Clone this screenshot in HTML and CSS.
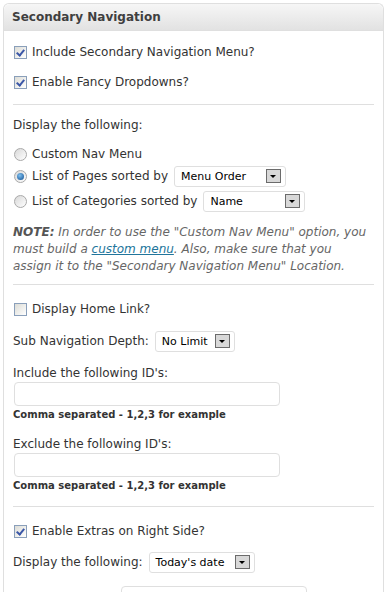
FILE: index.html
```html
<!DOCTYPE html>
<html lang="en">
<head>
    <meta charset="UTF-8">
    <title>Secondary Navigation</title>
    <link rel="stylesheet" href="styles.css">
</head>
<body>
    <div class="postbox">
        <h3 class="hndle">Secondary Navigation</h3>
        <div class="inside">
            <div class="line first"><span class="cb checked"></span>Include Secondary Navigation Menu?</div>
            <div class="line gap-cb"><span class="cb checked"></span>Enable Fancy Dropdowns?</div>
            <div class="sep"></div>

            <div class="line after-sep">Display the following:</div>
            <div class="line radio-first"><span class="rd"></span>Custom Nav Menu</div>
            <div class="line sel-row"><span class="rd on"></span>List of Pages sorted by
                <span class="select w-menu">Menu Order<span class="arrow"></span></span>
            </div>
            <div class="line sel-row"><span class="rd"></span>List of Categories sorted by
                <span class="select w-name">Name<span class="arrow"></span></span>
            </div>

            <p class="note"><b>NOTE:</b> In order to use the "Custom Nav Menu" option, you must build a <a href="#">custom menu</a>. Also, make sure that you<br>assign it to the "Secondary Navigation Menu" Location.</p>
            <div class="sep sep-note"></div>

            <div class="line after-sep2"><span class="cb"></span>Display Home Link?</div>
            <div class="line sel-row depth">Sub Navigation Depth:
                <span class="select w-limit">No Limit<span class="arrow"></span></span>
            </div>

            <div class="line label">Include the following ID's:</div>
            <div class="text-input"></div>
            <div class="hint">Comma separated - 1,2,3 for example</div>

            <div class="line label label-2">Exclude the following ID's:</div>
            <div class="text-input"></div>
            <div class="hint">Comma separated - 1,2,3 for example</div>
            <div class="sep sep-3"></div>

            <div class="line after-sep2"><span class="cb checked"></span>Enable Extras on Right Side?</div>
            <div class="line sel-row extras">Display the following:
                <span class="select w-date">Today's date<span class="arrow"></span></span>
            </div>
            <div class="text-input extra-input"></div>
        </div>
    </div>
</body>
</html>
```

FILE: styles.css
```css
body {
    margin: 0;
    background-color: #fff;
    font-family: "DejaVu Sans", Verdana, sans-serif;
    font-size: 12px;
    color: #333;
}
.postbox {
    margin: 3px 4px 0 3px;
    border: 1px solid #dfdfdf;
    border-bottom: none;
    border-radius: 6px 6px 0 0;
    height: 600px;
}
.hndle {
    margin: 0;
    height: 26px;
    line-height: 26px;
    padding: 0 8px;
    font-size: 12px;
    color: #3f3f3f;
    background: linear-gradient(#f6f6f6, #e2e2e2);
    border-bottom: 1px solid #dfdfdf;
    border-radius: 6px 6px 0 0;
}
.inside {
    padding: 0 9px;
}
.line {
    display: flex;
    align-items: center;
    height: 17px;
    line-height: 17px;
}
.first { margin-top: 13px; }
.gap-cb { margin-top: 13px; }
.sep {
    height: 1px;
    background-color: #dfdfdf;
    margin-top: 13px;
}
.after-sep { margin-top: 12px; }
.after-sep2 { margin-top: 16px; }
.radio-first { margin-top: 12px; }
.sel-row {
    height: 24px;
    margin-top: 1px;
}
.depth { margin-top: 11px; }
.extras { margin-top: 10px; }
.label { margin-top: 12px; }
.label-2 { margin-top: 14px; }
.sep-note { margin-top: 9px; }
.sep-3 { margin-top: 13px; }

/* checkbox */
.cb {
    width: 11px;
    height: 11px;
    border: 1px solid #8a9fba;
    background: linear-gradient(135deg, #dcdcd6, #fff);
    margin: 0 5px 0 1px;
    position: relative;
}
.cb.checked::after {
    content: "";
    position: absolute;
    left: 3px;
    top: 1px;
    width: 3px;
    height: 6px;
    border: solid #3b57a8;
    border-width: 0 2px 2px 0;
    transform: rotate(40deg);
}

/* radio */
.rd {
    width: 11px;
    height: 11px;
    border: 1px solid #a9a9a9;
    border-radius: 50%;
    background: linear-gradient(135deg, #d8d8d8, #fff);
    margin: 0 5px 0 1px;
    position: relative;
}
.rd.on::after {
    content: "";
    position: absolute;
    left: 2px;
    top: 2px;
    width: 7px;
    height: 7px;
    border-radius: 50%;
    background: radial-gradient(circle at 40% 35%, #7fc0f0, #0f4d8f);
}

/* dropdown */
.select {
    display: inline-flex;
    align-items: center;
    justify-content: space-between;
    height: 21px;
    margin-left: 6px;
    padding: 0 4px 0 6px;
    border: 1px solid #dfdfdf;
    border-radius: 3px;
    background-color: #fff;
    font-size: 11px;
    color: #000;
    box-sizing: border-box;
}
.w-menu { width: 112px; }
.w-name { width: 102px; }
.w-limit { width: 80px; }
.w-date { width: 106px; }
.arrow {
    width: 13px;
    height: 12px;
    border: 1px solid #6b6b6b;
    background-color: #d8d8d8;
    position: relative;
}
.arrow::after {
    content: "";
    position: absolute;
    left: 3px;
    top: 5px;
    border-left: 3px solid transparent;
    border-right: 3px solid transparent;
    border-top: 3px solid #000;
}

.note {
    margin: 11px 0 0;
    line-height: 17px;
    font-style: italic;
    color: #666;
}
.note b { color: #555; }
.note a { color: #21759b; }

.text-input {
    width: 266px;
    height: 24px;
    margin-left: 1px;
    border: 1px solid #dfdfdf;
    border-radius: 4px;
    box-sizing: border-box;
}
.hint {
    margin-top: 2px;
    line-height: 14px;
    font-size: 10px;
    font-weight: bold;
    color: #333;
}
.extra-input {
    width: 186px;
    margin: 12px 0 0 108px;
}
```
